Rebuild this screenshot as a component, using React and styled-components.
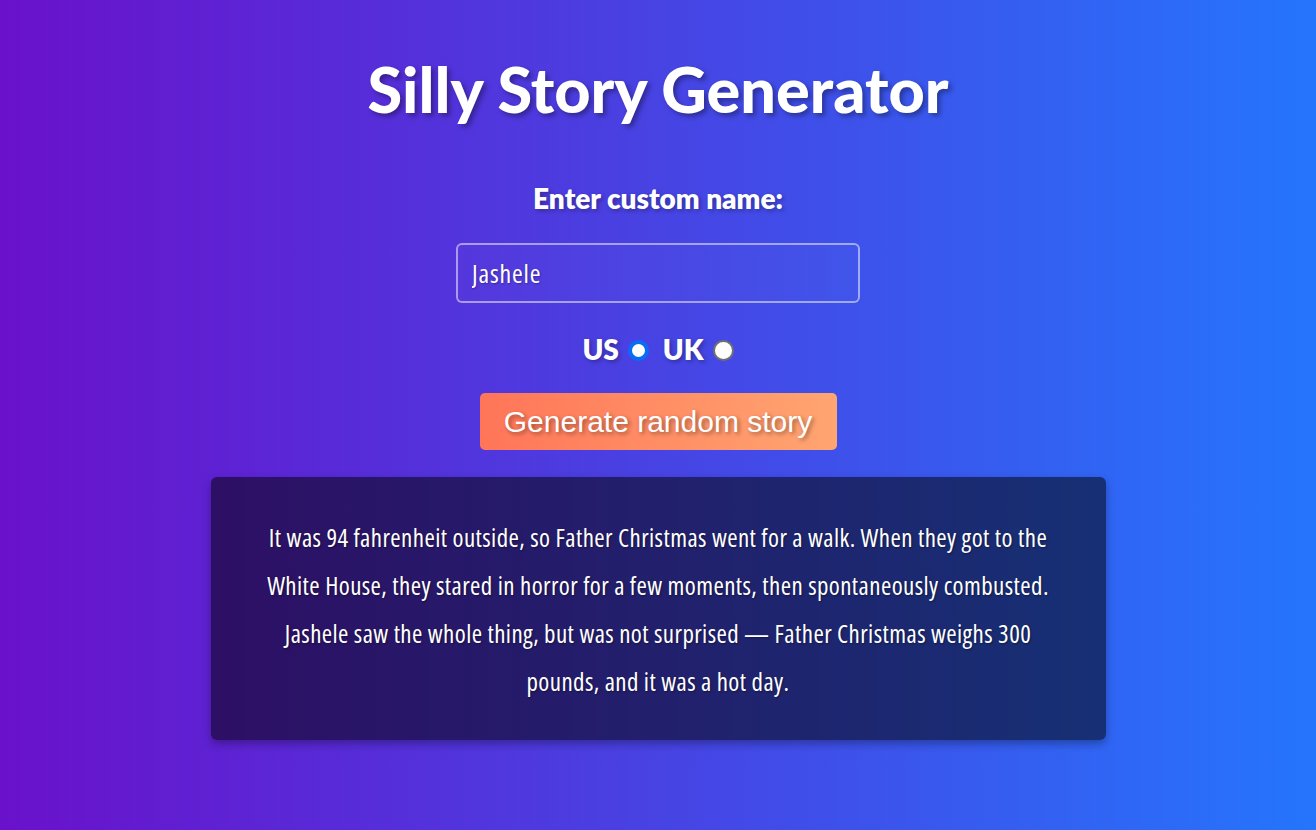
import { useState } from "react";
import styled, { createGlobalStyle } from "styled-components";

const Global = createGlobalStyle`
  html, body { margin: 0; padding: 0; }
  body {
    min-height: 100vh;
    background: linear-gradient(to right, #6a11cb 0%, #2575fc 100%);
    font-family: "Open Sans", "Noto Sans", sans-serif;
    color: #fff;
  }
`;

const Page = styled.main`
  min-height: 100vh;
  display: flex;
  flex-direction: column;
  align-items: center;
  padding-top: 46px;
  box-sizing: border-box;
`;

const Title = styled.h1`
  margin: 0;
  font-family: Lato, "Open Sans", sans-serif;
  font-size: 63px;
  line-height: 86px;
  font-weight: 900;
  text-shadow: 3px 3px 5px rgba(0, 0, 0, 0.35);
`;

const Label = styled.label`
  margin-top: 48px;
  font-family: Lato, "Open Sans", sans-serif;
  font-size: 28px;
  line-height: 36px;
  font-weight: 800;
  text-shadow: 2px 2px 4px rgba(0, 0, 0, 0.3);
`;

const NameInput = styled.input`
  margin-top: 27px;
  width: 404px;
  height: 60px;
  box-sizing: border-box;
  padding: 0 14px;
  border: 2px solid rgba(255, 255, 255, 0.5);
  border-radius: 6px;
  background: rgba(255, 255, 255, 0.02);
  color: #fff;
  font-family: inherit;
  font-size: 26px;
  font-stretch: 75%;
  letter-spacing: 0.8px;
  text-shadow: 1px 1px 2px rgba(0, 0, 0, 0.3);
  outline: none;
`;

const RadioRow = styled.div`
  margin-top: 24px;
  display: flex;
  align-items: center;
  gap: 14px;
  font-family: Lato, "Open Sans", sans-serif;
  font-size: 28px;
  line-height: 44px;
  font-weight: 800;
  text-shadow: 2px 2px 4px rgba(0, 0, 0, 0.3);
`;

const RadioLabel = styled.label`
  display: flex;
  align-items: center;
  gap: 9px;
`;

const Radio = styled.input.attrs({ type: "radio" })`
  appearance: none;
  margin: 3px 0 0;
  width: 21px;
  height: 21px;
  box-sizing: border-box;
  border-radius: 50%;
  background: #fff;
  border: ${(p) => (p.checked ? "4px solid #0a6cf5" : "2px solid #707070")};
`;

const GenerateButton = styled.button`
  margin-top: 22px;
  width: 357px;
  height: 57px;
  border: none;
  border-radius: 5px;
  background: linear-gradient(to right, #ff7558, #ffa571);
  color: #fff;
  font-family: "Liberation Sans", Arial, sans-serif;
  font-size: 30px;
  text-shadow: 2px 2px 4px rgba(0, 0, 0, 0.4);
  cursor: pointer;
`;

const Story = styled.section`
  margin-top: 27px;
  width: 895px;
  box-sizing: border-box;
  padding: 36px 40px 35px;
  border-radius: 6px;
  background: rgba(0, 0, 0, 0.52);
  box-shadow: 0 4px 8px rgba(0, 0, 0, 0.3);
`;

const StoryText = styled.p`
  margin: 0;
  text-align: center;
  font-size: 25px;
  line-height: 48px;
  font-stretch: 75%;
  letter-spacing: 0.4px;
  text-shadow: 1px 1px 2px rgba(0, 0, 0, 0.4);
`;

const storyLines = [
  "It was 94 fahrenheit outside, so Father Christmas went for a walk. When they got to the",
  "White House, they stared in horror for a few moments, then spontaneously combusted.",
  "Jashele saw the whole thing, but was not surprised \u2014 Father Christmas weighs 300",
  "pounds, and it was a hot day.",
];

export default function App() {
  const [name, setName] = useState("Jashele");
  const [country, setCountry] = useState("us");

  return (
    <>
      <Global />
      <Page>
        <Title>Silly Story Generator</Title>
        <Label htmlFor="customname">Enter custom name:</Label>
        <NameInput
          id="customname"
          value={name}
          onChange={(e) => setName(e.target.value)}
        />
        <RadioRow>
          <RadioLabel>
            US
            <Radio
              name="ukus"
              checked={country === "us"}
              onChange={() => setCountry("us")}
            />
          </RadioLabel>
          <RadioLabel>
            UK
            <Radio
              name="ukus"
              checked={country === "uk"}
              onChange={() => setCountry("uk")}
            />
          </RadioLabel>
        </RadioRow>
        <GenerateButton>Generate random story</GenerateButton>
        <Story>
          <StoryText>
            {storyLines.map((line, i) => (
              <span key={i}>
                {line}
                {i < storyLines.length - 1 && <br />}
              </span>
            ))}
          </StoryText>
        </Story>
      </Page>
    </>
  );
}
